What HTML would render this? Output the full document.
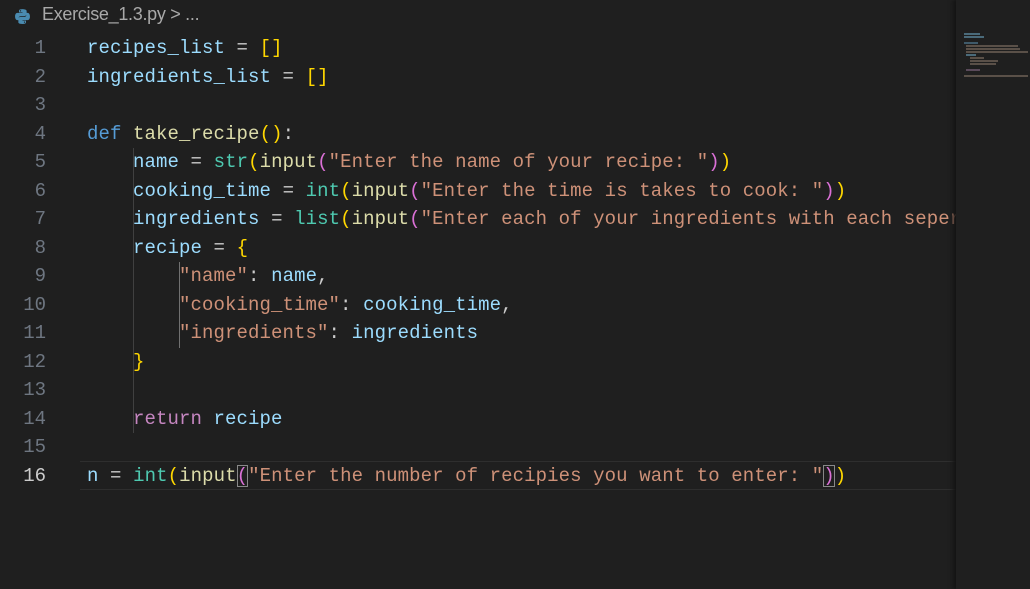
<!DOCTYPE html>
<html><head><style>
html,body{margin:0;padding:0;background:#1f1f1f;width:1030px;height:589px;overflow:hidden}
.bc{position:absolute;left:42px;top:4px;font:18px "Liberation Sans",sans-serif;color:#a9a9a9;white-space:pre;letter-spacing:-0.3px}
.code{position:absolute;left:0;top:34px;font:19px/28.53px "Liberation Mono",monospace;white-space:pre}
.ln{position:absolute;left:0;width:46px;text-align:right;color:#6e7681}
.tx{position:absolute;left:87px;letter-spacing:0.1px}
.v{color:#9cdcfe}.k{color:#569cd6}.f{color:#dcdcaa}.b{color:#4ec9b0}.s{color:#ce9178}.r{color:#c586c0}.w{color:#cccccc}
.g{color:#ffd700}.p{color:#da70d6}
.guide{position:absolute;width:1px;background:#404040}
.cur{position:absolute;left:80px;top:461px;width:876px;height:27px;border-top:1px solid #2e2e2e;border-bottom:1px solid #2e2e2e}
.mm{position:absolute;left:956px;top:0;width:74px;height:589px;background:#1f1f1f;box-shadow:-3px 0 4px #141414}
.mm i{position:absolute;height:2px;display:block}
</style></head><body>
<svg style="position:absolute;left:14px;top:8px" width="17" height="17" viewBox="0 0 16 16"><path d="M7.9 1C4.5 1 4.7 2.5 4.7 2.5v1.6H8v.5H3.4S1 4.3 1 7.9s2.1 3.5 2.1 3.5h1.3V9.7s-.1-2.1 2-2.1h3.5s2 0 2-1.9V2.9S12.2 1 7.9 1zM6.1 2.1a.6.6 0 110 1.2.6.6 0 010-1.2z" fill="#4a8bb0"/><path d="M8.1 15c3.4 0 3.2-1.5 3.2-1.5v-1.6H8v-.5h4.6S15 11.7 15 8.1s-2.1-3.5-2.1-3.5h-1.3v1.7s.1 2.1-2 2.1H6.1s-2 0-2 1.9v3.2S3.8 15 8.1 15zm1.8-1.1a.6.6 0 110-1.2.6.6 0 010 1.2z" fill="#4a8bb0"/></svg>
<div class="bc">Exercise_1.3.py &gt; ...</div>
<div class="cur"></div>
<div class="guide" style="left:133px;top:148px;height:285px"></div>
<div class="guide" style="left:179px;top:262px;height:86px;background:#707070"></div>
<div class="code">
<div class="ln" style="top:0">1</div><div class="tx" style="top:0"><span class="v">recipes_list</span> <span class="w">=</span> <span class="g">[]</span></div>
<div class="ln" style="top:28.53px">2</div><div class="tx" style="top:28.53px"><span class="v">ingredients_list</span> <span class="w">=</span> <span class="g">[]</span></div>
<div class="ln" style="top:57.06px">3</div>
<div class="ln" style="top:85.59px">4</div><div class="tx" style="top:85.59px"><span class="k">def</span> <span class="f">take_recipe</span><span class="g">()</span><span class="w">:</span></div>
<div class="ln" style="top:114.12px">5</div><div class="tx" style="top:114.12px">    <span class="v">name</span> <span class="w">=</span> <span class="b">str</span><span class="g">(</span><span class="f">input</span><span class="p">(</span><span class="s">"Enter the name of your recipe: "</span><span class="p">)</span><span class="g">)</span></div>
<div class="ln" style="top:142.65px">6</div><div class="tx" style="top:142.65px">    <span class="v">cooking_time</span> <span class="w">=</span> <span class="b">int</span><span class="g">(</span><span class="f">input</span><span class="p">(</span><span class="s">"Enter the time is takes to cook: "</span><span class="p">)</span><span class="g">)</span></div>
<div class="ln" style="top:171.18px">7</div><div class="tx" style="top:171.18px">    <span class="v">ingredients</span> <span class="w">=</span> <span class="b">list</span><span class="g">(</span><span class="f">input</span><span class="p">(</span><span class="s">"Enter each of your ingredients with each seper</span></div>
<div class="ln" style="top:199.71px">8</div><div class="tx" style="top:199.71px">    <span class="v">recipe</span> <span class="w">=</span> <span class="g">{</span></div>
<div class="ln" style="top:228.24px">9</div><div class="tx" style="top:228.24px">        <span class="s">"name"</span><span class="w">:</span> <span class="v">name</span><span class="w">,</span></div>
<div class="ln" style="top:256.77px">10</div><div class="tx" style="top:256.77px">        <span class="s">"cooking_time"</span><span class="w">:</span> <span class="v">cooking_time</span><span class="w">,</span></div>
<div class="ln" style="top:285.3px">11</div><div class="tx" style="top:285.3px">        <span class="s">"ingredients"</span><span class="w">:</span> <span class="v">ingredients</span></div>
<div class="ln" style="top:313.83px">12</div><div class="tx" style="top:313.83px">    <span class="g">}</span></div>
<div class="ln" style="top:342.36px">13</div>
<div class="ln" style="top:370.89px">14</div><div class="tx" style="top:370.89px">    <span class="r">return</span> <span class="v">recipe</span></div>
<div class="ln" style="top:399.42px">15</div>
<div class="ln" style="top:427.95px;color:#cccccc">16</div><div class="tx" style="top:427.95px"><span class="v">n</span> <span class="w">=</span> <span class="b">int</span><span class="g">(</span><span class="f">input</span><span class="p" style="outline:1px solid #888;outline-offset:-1px">(</span><span class="s">"Enter the number of recipies you want to enter: "</span><span class="p" style="outline:1px solid #888;outline-offset:-1px">)</span><span class="g">)</span></div>
</div>
<div class="mm">
<i style="left:8px;top:33px;width:16px;background:#4a6a7a"></i>
<i style="left:8px;top:36px;width:20px;background:#4a6a7a"></i>
<i style="left:8px;top:42px;width:14px;background:#3f5a6a"></i>
<i style="left:10px;top:45px;width:52px;background:#5a5048"></i>
<i style="left:10px;top:48px;width:54px;background:#5a5048"></i>
<i style="left:10px;top:51px;width:62px;background:#5a5048"></i>
<i style="left:10px;top:54px;width:10px;background:#4a6a7a"></i>
<i style="left:14px;top:57px;width:14px;background:#5a5048"></i>
<i style="left:14px;top:60px;width:28px;background:#5a5048"></i>
<i style="left:14px;top:63px;width:26px;background:#5a5048"></i>
<i style="left:10px;top:69px;width:14px;background:#5a4a5a"></i>
<i style="left:8px;top:75px;width:64px;background:#5a5048"></i>
</div>
</body></html>
